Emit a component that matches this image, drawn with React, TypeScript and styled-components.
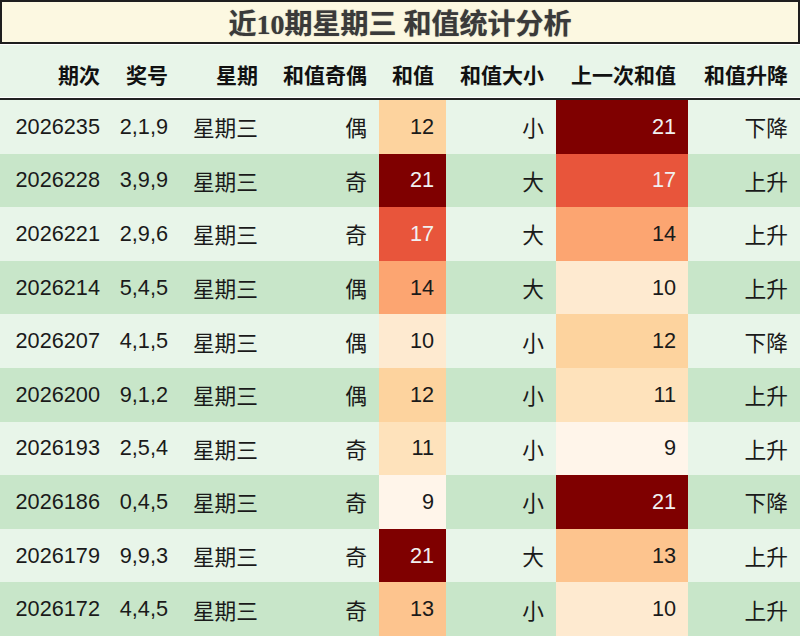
import React from "react";
import styled, { createGlobalStyle } from "styled-components";

const Global = createGlobalStyle`
  html, body { margin: 0; padding: 0; background: #ffffff; }
  body { font-family: "Liberation Sans", "Noto Sans CJK SC", sans-serif; }
`;

const COLS = "112px 68px 90px 109px 67px 110px 132px 112px";

const Page = styled.div`
  width: 800px;
  height: 637px;
  overflow: hidden;
  display: flex;
  flex-direction: column;
`;

const Title = styled.div`
  height: 40px;
  border: 2px solid #1e1e1e;
  background: #fcf8e1;
  display: flex;
  align-items: center;
  justify-content: center;
  font-family: "Liberation Serif", "Noto Sans CJK SC", serif;
  font-weight: 700;
  font-size: 28px;
  color: #3a3a3a;
  text-shadow: 0 0 1px rgba(60, 60, 60, 0.6);
  margin-bottom: 1px;
`;

const HeaderRow = styled.div`
  display: grid;
  grid-template-columns: ${COLS};
  height: 53px;
  background: #e8f5e9;
  border-bottom: 2px solid #222222;
  box-shadow: inset 0 -1px 0 #ffffff;
`;

const HeadCell = styled.div`
  display: flex;
  align-items: center;
  justify-content: flex-end;
  padding: 4px 12px 0 0;
  font-family: "Noto Sans CJK SC", sans-serif;
  font-weight: 700;
  font-size: 21px;
  color: #111;
  white-space: nowrap;
`;

const Row = styled.div<{ $even: boolean }>`
  display: grid;
  grid-template-columns: ${COLS};
  height: 53.6px;
  background: ${(p) => (p.$even ? "#c8e6c9" : "#e8f5e9")};
`;

const Cell = styled.div<{ $bg?: string; $light?: boolean }>`
  display: flex;
  align-items: center;
  justify-content: flex-end;
  padding-right: 12px;
  font-size: 21.7px;
  color: ${(p) => (p.$light ? "#f1f1f1" : "#1a1a1a")};
  background: ${(p) => p.$bg || "transparent"};
  white-space: nowrap;
`;

const heat: Record<number, string> = {
  9: "#fff5ea",
  10: "#feead0",
  11: "#fee2bb",
  12: "#fdd39e",
  13: "#fdc48e",
  14: "#fca571",
  17: "#e8553b",
  21: "#7f0000",
};

const rows: [string, string, string, string, number, string, number, string][] = [
  ["2026235", "2,1,9", "星期三", "偶", 12, "小", 21, "下降"],
  ["2026228", "3,9,9", "星期三", "奇", 21, "大", 17, "上升"],
  ["2026221", "2,9,6", "星期三", "奇", 17, "大", 14, "上升"],
  ["2026214", "5,4,5", "星期三", "偶", 14, "大", 10, "上升"],
  ["2026207", "4,1,5", "星期三", "偶", 10, "小", 12, "下降"],
  ["2026200", "9,1,2", "星期三", "偶", 12, "小", 11, "上升"],
  ["2026193", "2,5,4", "星期三", "奇", 11, "小", 9, "上升"],
  ["2026186", "0,4,5", "星期三", "奇", 9, "小", 21, "下降"],
  ["2026179", "9,9,3", "星期三", "奇", 21, "大", 13, "上升"],
  ["2026172", "4,4,5", "星期三", "奇", 13, "小", 10, "上升"],
];

const headers = ["期次", "奖号", "星期", "和值奇偶", "和值", "和值大小", "上一次和值", "和值升降"];

export default function App() {
  return (
    <Page>
      <Global />
      <Title>近10期星期三 和值统计分析</Title>
      <HeaderRow>
        {headers.map((h) => (
          <HeadCell key={h}>{h}</HeadCell>
        ))}
      </HeaderRow>
      {rows.map((r, i) => (
        <Row key={r[0]} $even={i % 2 === 1}>
          <Cell>{r[0]}</Cell>
          <Cell>{r[1]}</Cell>
          <Cell>{r[2]}</Cell>
          <Cell>{r[3]}</Cell>
          <Cell $bg={heat[r[4]]} $light={r[4] >= 17}>{r[4]}</Cell>
          <Cell>{r[5]}</Cell>
          <Cell $bg={heat[r[6]]} $light={r[6] >= 17}>{r[6]}</Cell>
          <Cell>{r[7]}</Cell>
        </Row>
      ))}
    </Page>
  );
}
